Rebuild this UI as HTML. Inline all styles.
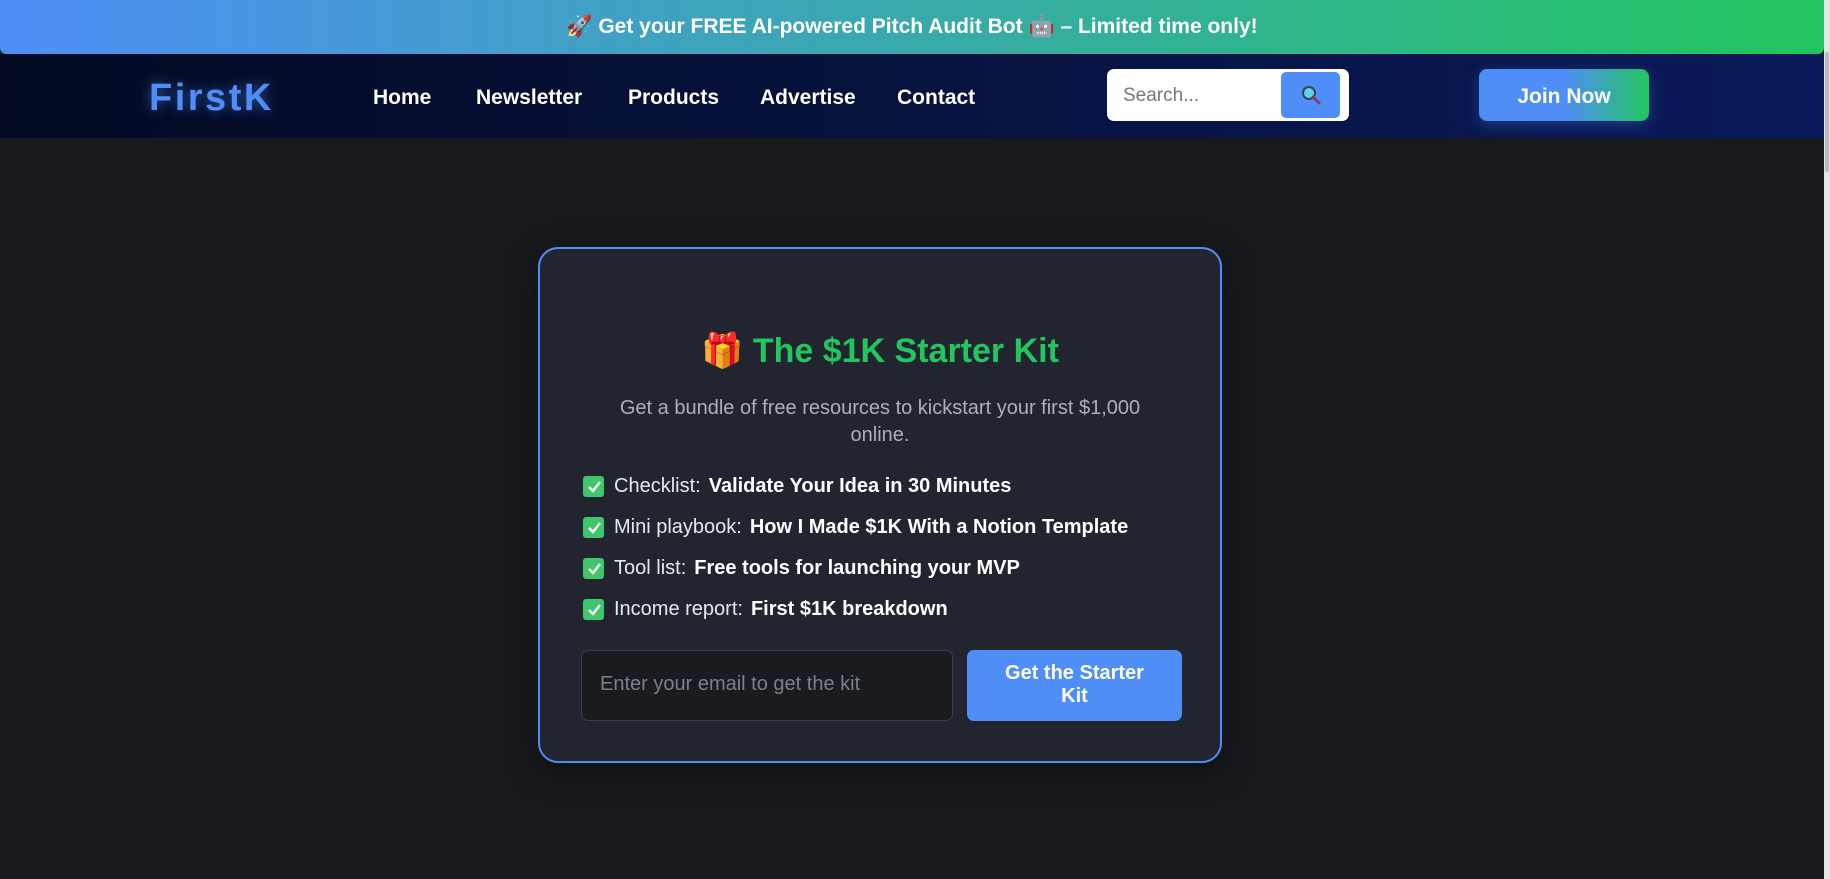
<!DOCTYPE html>
<html><head><meta charset="utf-8"><style>
*{box-sizing:border-box;margin:0;padding:0}
html,body{width:1830px;height:879px;overflow:hidden;background:#18191d;font-family:"Liberation Sans",sans-serif}
.banner{position:absolute;left:0;top:0;width:1824px;height:54px;background:linear-gradient(90deg,#4f8ef7,#22c55e);border-radius:0 0 6px 6px;color:#fff;font-weight:bold;font-size:21px;display:flex;align-items:center;justify-content:center}
.sb{position:absolute;right:0;top:0;width:6px;height:879px;background:#e6e6e6}
.sb i{position:absolute;left:1px;top:52px;width:4px;height:120px;background:#bbb;border-radius:2px}
nav{position:absolute;left:0;top:54px;width:1824px;height:84px;background:linear-gradient(90deg,#030a22,#0b1a5a)}
.logo{position:absolute;left:149px;top:23px;font-size:38px;font-weight:bold;color:#4f8ef7;text-shadow:0 0 12px rgba(79,142,247,.6);letter-spacing:2.5px}
.links a{position:absolute;top:32px;color:#fff;font-weight:bold;font-size:21px;text-decoration:none}
.search{position:absolute;left:1107px;top:15px;width:242px;height:52px;background:#fff;border-radius:7px}
.search span{position:absolute;left:16px;top:16px;font-size:19px;color:#777}
.search b{position:absolute;left:174px;top:3px;width:59px;height:46px;background:#4f8ef7;border-radius:5px;display:flex;align-items:center;justify-content:center}
.join{position:absolute;left:1479px;top:15px;width:170px;height:52px;border-radius:8px;background:linear-gradient(90deg,#4f8ef7 50%,#22c55e);color:#fff;font-weight:bold;font-size:21px;display:flex;align-items:center;justify-content:center;padding-top:4px;box-shadow:0 4px 14px rgba(79,142,247,.3)}
.card{position:absolute;left:538px;top:247px;width:684px;height:516px;border:2.5px solid #4f8ef7;border-radius:20px;background:#22252f;box-shadow:0 8px 30px rgba(0,0,0,.4)}
h1{position:absolute;left:0;width:100%;top:82px;text-align:center;font-size:34px;color:#22c55e}
.sub{position:absolute;left:62px;right:62px;top:146px;text-align:center;color:#a9b0c0;font-size:20px;line-height:27px}
.li{position:absolute;left:43px;font-size:20px;color:#e6e8ee;display:flex;align-items:center}
.li .c{width:21px;height:21px;background:#3fc56b;border-radius:3px;margin-right:10px;display:flex;align-items:center;justify-content:center}
.li b{color:#fff;margin-left:8px}
.inp{position:absolute;left:41px;top:401px;width:372px;height:71px;background:#1a1b20;border:1px solid #3a3d48;border-radius:7px;color:#7d808a;font-size:20px;padding:22px 18px}
.btn{position:absolute;left:427px;top:401px;width:215px;height:71px;background:#4f8ef7;border-radius:7px;color:#fff;font-weight:bold;font-size:20px;text-align:center;line-height:23px;padding-top:12px}
</style></head><body>
<div class="banner">🚀 Get your FREE AI-powered Pitch Audit Bot 🤖 – Limited time only!</div>
<div class="sb"><i></i></div>
<nav>
<div class="logo">FirstK</div>
<div class="links"><a style="left:373px">Home</a><a style="left:476px">Newsletter</a><a style="left:628px">Products</a><a style="left:760px">Advertise</a><a style="left:897px">Contact</a></div>
<div class="search"><span>Search...</span><b><svg width="22" height="22" viewBox="0 0 22 22"><circle cx="9" cy="9" r="6" fill="#5fd3e6" stroke="#345" stroke-width="2"/><path d="M13 13l6 6" stroke="#8a3a6a" stroke-width="3" stroke-linecap="round"/></svg></b></div>
<div class="join">Join Now</div>
</nav>
<div class="card">
<h1>🎁 The $1K Starter Kit</h1>
<div class="sub">Get a bundle of free resources to kickstart your first $1,000 online.</div>
<div class="li" style="top:226px"><span class="c"><svg width="14" height="14"><path d="M2 7l4 4 7-9" stroke="#fff" stroke-width="2.4" fill="none"/></svg></span>Checklist: <b>Validate Your Idea in 30 Minutes</b></div>
<div class="li" style="top:267px"><span class="c"><svg width="14" height="14"><path d="M2 7l4 4 7-9" stroke="#fff" stroke-width="2.4" fill="none"/></svg></span>Mini playbook: <b>How I Made $1K With a Notion Template</b></div>
<div class="li" style="top:308px"><span class="c"><svg width="14" height="14"><path d="M2 7l4 4 7-9" stroke="#fff" stroke-width="2.4" fill="none"/></svg></span>Tool list: <b>Free tools for launching your MVP</b></div>
<div class="li" style="top:349px"><span class="c"><svg width="14" height="14"><path d="M2 7l4 4 7-9" stroke="#fff" stroke-width="2.4" fill="none"/></svg></span>Income report: <b>First $1K breakdown</b></div>
<div class="inp">Enter your email to get the kit</div>
<div class="btn">Get the Starter<br>Kit</div>
</div>
</body></html>
